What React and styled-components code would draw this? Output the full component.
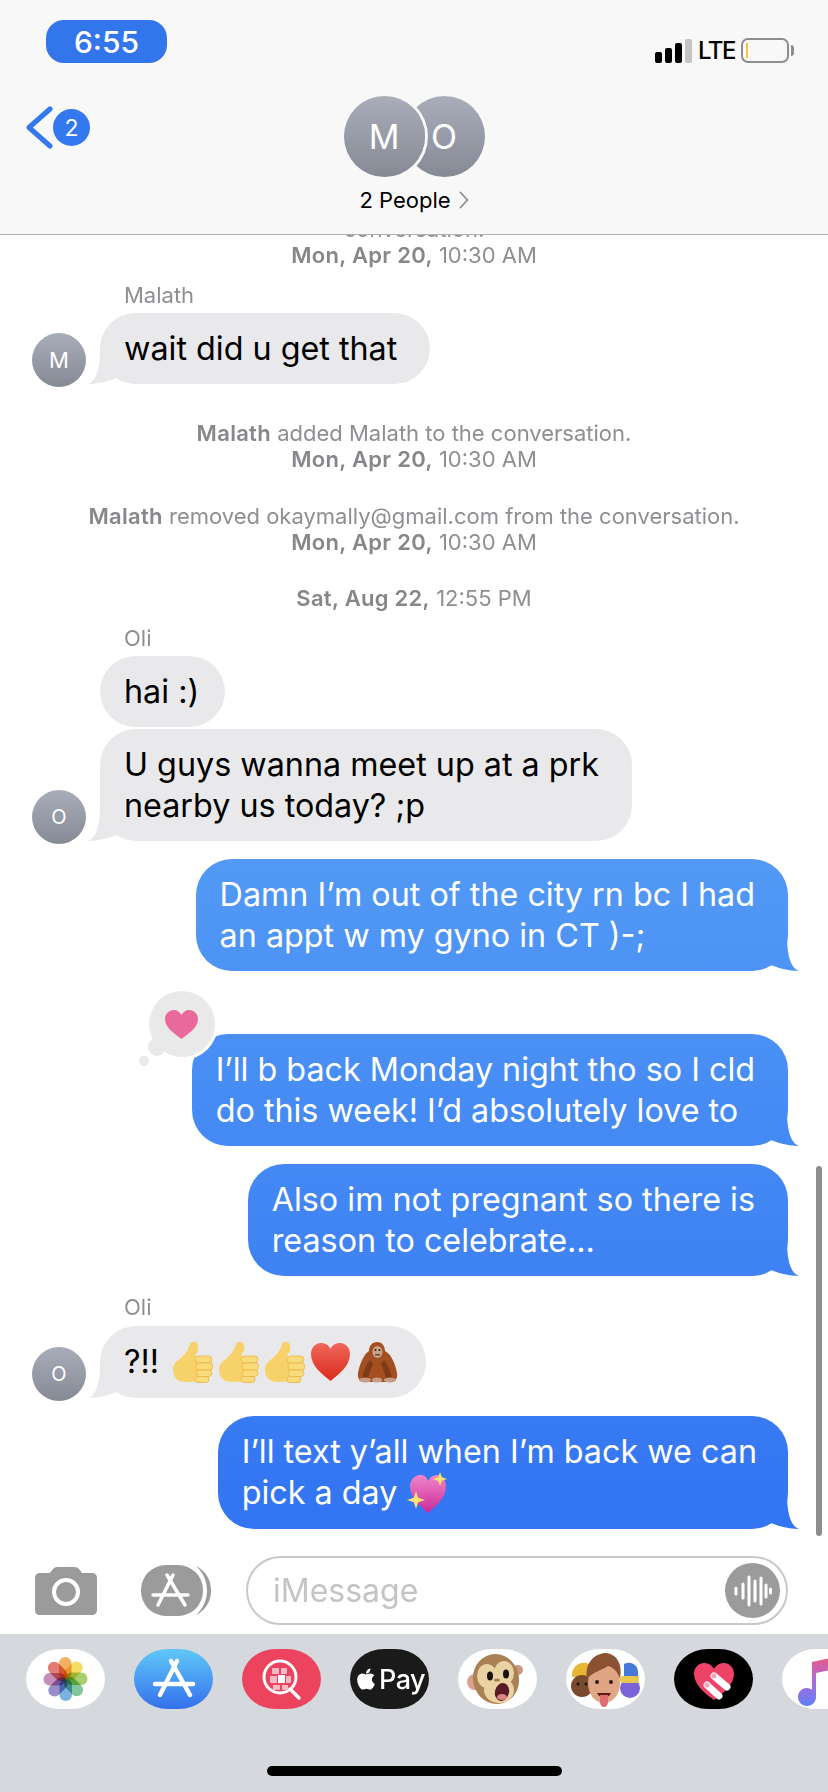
import styled, { createGlobalStyle } from "styled-components"
import { FaApple } from "react-icons/fa"

const GlobalStyle = createGlobalStyle`
    html, body {
        margin: 0;
        padding: 0;
        background: #fff;
    }
    * {
        box-sizing: border-box;
    }
`

const Phone = styled.div`
    position: relative;
    width: 828px;
    height: 1792px;
    display: flex;
    flex-direction: column;
    overflow: hidden;
    font-family: Inter, "Noto Sans", sans-serif;
    background: #fff;
`

const Header = styled.header`
    height: 235px;
    flex-shrink: 0;
    background: #f8f8f8;
    border-bottom: 1px solid #b2b2b2;
    position: relative;
    z-index: 2;
`

const StatusBar = styled.div`
    height: 72px;
    padding: 20px 39px 0 46px;
    display: flex;
    justify-content: space-between;
    align-items: flex-start;
`

const TimePill = styled.div`
    width: 121px;
    height: 43px;
    border-radius: 18px;
    background: #3375ea;
    color: #fff;
    font-size: 30px;
    font-weight: 500;
    display: flex;
    align-items: center;
    justify-content: center;
`

const StatusIcons = styled.div`
    display: flex;
    align-items: center;
    gap: 6px;
    margin-top: 18px;
`

const Lte = styled.span`
    font-size: 24px;
    font-weight: 500;
    letter-spacing: -1.5px;
    line-height: 25px;
    color: #000;
`

const Battery = styled.div`
    position: relative;
    width: 48px;
    height: 25px;
    border: 2px solid #8e8e8e;
    border-radius: 7px;
    padding: 3px;

    &::before {
        content: "";
        display: block;
        width: 2px;
        height: 100%;
        background: #f5c542;
    }

    &::after {
        content: "";
        position: absolute;
        right: -7px;
        top: 5px;
        width: 3px;
        height: 11px;
        border-radius: 0 3px 3px 0;
        background: #8e8e8e;
    }
`

const NavBar = styled.div`
    display: grid;
    grid-template-columns: 1fr auto 1fr;
    padding: 24px 25px 0;
`

const Back = styled.div`
    display: flex;
    align-items: center;
    height: 41px;
    margin-top: 11px;
`

const BackBadge = styled.div`
    width: 37px;
    height: 37px;
    border-radius: 50%;
    background: #3478f0;
    color: #fff;
    font-size: 23px;
    display: flex;
    align-items: center;
    justify-content: center;
`

const NavCenter = styled.div`
    display: flex;
    flex-direction: column;
    align-items: center;
`

const AvatarStack = styled.div`
    display: flex;
`

const Avatar = styled.div`
    position: relative;
    z-index: ${(p) => (p.$front ? 2 : 1)};
    width: ${(p) => p.$size}px;
    height: ${(p) => p.$size}px;
    flex-shrink: 0;
    border-radius: 50%;
    background: linear-gradient(#a9adb9, #858a95);
    color: #fff;
    font-size: ${(p) => p.$font}px;
    font-weight: 400;
    display: flex;
    align-items: center;
    justify-content: center;
    margin-left: ${(p) => p.$overlap || 0}px;
    box-shadow: ${(p) => (p.$front ? "0 0 0 3px #f8f8f8" : "none")};
`

const PeopleRow = styled.div`
    display: flex;
    align-items: center;
    gap: 8px;
    margin-top: 9px;
    font-size: 22px;
    color: #000;
    line-height: 28px;
`

const Messages = styled.main`
    flex: 1;
    min-height: 0;
    overflow: hidden;
    display: flex;
    flex-direction: column;
`

const Note = styled.div`
    text-align: center;
    font-size: 22px;
    line-height: 26px;
    color: #8e8e93;
    margin-top: ${(p) => p.$top}px;
`

const NoteStrong = styled.span`
    font-weight: 600;
    letter-spacing: 0.3px;
    color: #87878b;
`

const Sender = styled.div`
    font-size: 22px;
    line-height: 24px;
    color: #8e8e93;
    padding-left: 124px;
    margin-top: ${(p) => p.$top}px;
`

const InRow = styled.div`
    display: flex;
    align-items: flex-end;
    padding-left: ${(p) => (p.$avatar ? 32 : 100)}px;
    margin-top: ${(p) => p.$top}px;
`

const AvatarSlot = styled.div`
    margin-right: 14px;
    margin-bottom: -3px;
`

const Bubble = styled.div`
    position: relative;
    width: fit-content;
    padding: 15px ${(p) => p.$right ?? 33}px 15px 24px;
    border-radius: 36px;
    font-size: 32.300px;
    line-height: 41px;
    white-space: nowrap;
`

const GrayBubble = styled(Bubble)`
    background: #e9e9eb;
    color: #000;

    &::before {
        display: ${(p) => (p.$tail ? "block" : "none")};
        content: "";
        position: absolute;
        left: -12px;
        bottom: 0;
        width: 42px;
        height: 40px;
        background: #e9e9eb;
        clip-path: path("M0 40C8 37 12 26 12 4L30 4L30 33C22 37 10 40 0 40Z");
    }
`

const OutRow = styled.div`
    display: flex;
    justify-content: flex-end;
    padding-right: 40px;
    margin-top: ${(p) => p.$top}px;
`

const BlueBubble = styled(Bubble)`
    background: linear-gradient(#6fb2f7 0, #5aa2f6 700px, #3274f2 1530px) fixed;
    color: #fff;

    &::before {
        content: "";
        position: absolute;
        right: -11px;
        bottom: 0;
        width: 42px;
        height: 40px;
        background: inherit;
        background-attachment: fixed;
        clip-path: path("M42 40C34 37 30 26 30 4L12 4L12 33C20 37 32 40 42 40Z");
    }
`

const Tapback = styled.div`
    position: absolute;
    left: -43px;
    top: -43px;
    width: 66px;
    height: 66px;
    border-radius: 50%;
    background: #e9e9ea;
    box-shadow: 0 0 0 3px #fff;
    display: flex;
    align-items: center;
    justify-content: center;
    z-index: 1;

    &::before {
        content: "";
        position: absolute;
        left: -1px;
        top: 47px;
        width: 18px;
        height: 18px;
        border-radius: 50%;
        background: #e9e9ea;
    }

    &::after {
        content: "";
        position: absolute;
        left: -10px;
        top: 65px;
        width: 10px;
        height: 10px;
        border-radius: 50%;
        background: #e9e9ea;
    }
`

const Emoji = styled.svg`
    display: inline-block;
    width: 41px;
    height: 42px;
    vertical-align: -10px;
    margin-left: ${(p) => p.$lead ?? 0}px;
    margin-right: ${(p) => p.$gap ?? 5}px;
`

const Scrollbar = styled.div`
    position: absolute;
    right: 6px;
    top: 1166px;
    width: 6px;
    height: 370px;
    border-radius: 3px;
    background: #8d8d8d;
    z-index: 3;
`

const Composer = styled.div`
    height: 89px;
    flex-shrink: 0;
    padding: 2px 40px 0 35px;
    display: flex;
    align-items: center;
`

const InputBox = styled.div`
    flex: 1;
    height: 69px;
    margin-left: 35px;
    border: 2px solid #c8c8c8;
    border-radius: 35px;
    padding: 0 6px 0 25px;
    display: flex;
    align-items: center;
    justify-content: space-between;
`

const Placeholder = styled.span`
    font-size: 32px;
    color: #c4c4c6;
`

const MicButton = styled.div`
    width: 55px;
    height: 55px;
    border-radius: 50%;
    background: #9b9b9b;
    display: flex;
    align-items: center;
    justify-content: center;
`

const AppButton = styled.svg`
    width: 70px;
    height: 51px;
    margin-left: 44px;
    flex-shrink: 0;
`

const CameraIcon = styled.svg`
    width: 62px;
    height: 48px;
    flex-shrink: 0;
`

const Drawer = styled.div`
    height: 158px;
    flex-shrink: 0;
    background: #d5d8dd;
    padding-top: 15px;
    overflow: hidden;
`

const AppRow = styled.div`
    display: flex;
    gap: 29px;
    padding-left: 26px;
`

const AppPill = styled.div`
    width: 79px;
    height: 60px;
    flex-shrink: 0;
    border-radius: 34px / 30px;
    overflow: hidden;
    background: ${(p) => p.$bg || "#fff"};
    display: flex;
    align-items: center;
    justify-content: center;
`

const PayLabel = styled.span`
    color: #fff;
    font-size: 27px;
    font-weight: 500;
    letter-spacing: -0.5px;
    margin-left: 1px;
`

const PillArt = styled.svg`
    width: 79px;
    height: 60px;
    display: block;
`

const HomeBar = styled.div`
    width: 295px;
    height: 10px;
    border-radius: 5px;
    background: #000;
    margin: 57px auto 0;
`

function ThumbsUp({ lead }) {
    return (
        <Emoji viewBox="0 0 41 42" $lead={lead}>
            <path d="M1 28c0-6 6-9 10-13 4-4 6-8 7-12 1-3 7-3 8 1 1 4-1 8-3 11h12c4 0 4 22 0 23-6 2-14 3-21 3C6 41 1 37 1 28z" fill="#f7d26a" />
            <g fill="#fadb7c" stroke="#e8b548" strokeWidth="0.800">
                <rect x="23" y="15" width="17" height="7" rx="3.500" />
                <rect x="24" y="22" width="17" height="7" rx="3.500" />
                <rect x="24" y="29" width="16" height="6.500" rx="3.250" />
                <rect x="23" y="35.500" width="14" height="6" rx="3" />
            </g>
        </Emoji>
    )
}

function RedHeart() {
    return (
        <Emoji viewBox="0 0 41 42" $gap={6}>
            <defs>
                <linearGradient id="redHeart" x1="0" y1="0" x2="0" y2="1">
                    <stop offset="0" stopColor="#f0685a" />
                    <stop offset="1" stopColor="#d92a1c" />
                </linearGradient>
            </defs>
            <path d="M20.500 40C12 33 1 25 1 13 1 6 6 2 11 2c4 0 8 2 9.500 6C22 4 26 2 30 2c5 0 10 4 10 11 0 12-11 20-19.500 27z" fill="url(#redHeart)" />
        </Emoji>
    )
}

function Orangutan() {
    return (
        <Emoji viewBox="0 0 41 42" $gap={0}>
            <path d="M20 1c5 0 8 4 8 9 6 3 10 12 12 22 1 5-2 9-6 9H7c-4 0-7-4-6-9C3 22 7 13 12 10c0-5 3-9 8-9z" fill="#a34f22" />
            <path d="M13 19c-4 5-7 12-8 19h6c1-6 3-11 5-15zM27 19c4 5 7 12 8 19h-6c-1-6-3-11-5-15z" fill="#7d3a17" />
            <ellipse cx="20.500" cy="11" rx="5" ry="6" fill="#c9a48a" />
            <circle cx="18.500" cy="9" r="1" fill="#2d1a10" />
            <circle cx="22.500" cy="9" r="1" fill="#2d1a10" />
            <rect x="18" y="13" width="5" height="1.500" fill="#6b4632" />
            <ellipse cx="8" cy="39" rx="6" ry="2.500" fill="#c99c85" />
            <ellipse cx="20" cy="39" rx="5" ry="2.500" fill="#c99c85" />
            <ellipse cx="33" cy="39" rx="6" ry="2.500" fill="#c99c85" />
        </Emoji>
    )
}

function SparkleHeart() {
    return (
        <Emoji viewBox="0 0 41 42" $gap={0}>
            <defs>
                <linearGradient id="sparkleHeart" x1="0" y1="0" x2="0" y2="1">
                    <stop offset="0" stopColor="#f286c8" />
                    <stop offset="1" stopColor="#c72a9a" />
                </linearGradient>
            </defs>
            <path d="M21 41C13 34 3 26 3 14 3 8 8 3 13 3c4 0 7 2 8 6 2-4 5-6 9-6 5 0 9 5 9 11 0 12-10 20-18 27z" fill="url(#sparkleHeart)" />
            <path d="M33 0l1.800 5.200L40 7l-5.200 1.800L33 14l-1.800-5.200L26 7l5.200-1.800zM9 19l2.200 6.800L18 28l-6.800 2.200L9 37l-2.200-6.800L0 28l6.800-2.200z" fill="#fbe36d" />
        </Emoji>
    )
}

function PhotosFlower() {
    const petals = ["#f0a64a", "#f2d94e", "#9cc95a", "#6fbf8f", "#68a9dc", "#8d7fc4", "#bd7fb0", "#df6a5e"]
    return (
        <PillArt viewBox="0 0 79 60">
            {petals.map((color, i) => (
                <rect
                    key={color}
                    x="33"
                    y="8"
                    width="12.500"
                    height="22"
                    rx="6.250"
                    fill={color}
                    opacity="0.88"
                    style={{ mixBlendMode: "multiply" }}
                    transform={`rotate(${i * 45} 39.500 30)`}
                />
            ))}
        </PillArt>
    )
}

function SearchGlobe() {
    return (
        <PillArt viewBox="0 0 79 60">
            <circle cx="38" cy="28" r="16" fill="none" stroke="#fff" strokeWidth="3" />
            <g fill="#f7b9c4">
                <rect x="30" y="19" width="7" height="6" />
                <rect x="39" y="19" width="6" height="6" />
                <rect x="28" y="27" width="7" height="7" />
                <rect x="44" y="27" width="5" height="7" />
                <rect x="31" y="36" width="7" height="5" />
                <rect x="40" y="36" width="6" height="5" />
            </g>
            <rect x="36" y="26" width="7" height="8" fill="#fff" />
            <path d="M48 40l9 9" stroke="#fff" strokeWidth="3.500" strokeLinecap="round" />
        </PillArt>
    )
}

function Monkey() {
    return (
        <PillArt viewBox="0 0 79 60">
            <circle cx="17" cy="33" r="8" fill="#d9a08e" />
            <circle cx="60" cy="21" r="5" fill="#c9977f" />
            <ellipse cx="38" cy="30" rx="23" ry="25" fill="#a98152" transform="rotate(-12 38 30)" />
            <ellipse cx="29" cy="27" rx="10" ry="12" fill="#ead3a3" />
            <ellipse cx="46" cy="24" rx="10" ry="12" fill="#ead3a3" />
            <ellipse cx="41" cy="41" rx="15" ry="13" fill="#ead3a3" />
            <ellipse cx="32" cy="27" rx="3" ry="4.500" fill="#1a1210" />
            <ellipse cx="48" cy="25" rx="3" ry="4.500" fill="#1a1210" />
            <ellipse cx="39" cy="31" rx="3" ry="1.500" fill="#a77f56" />
            <ellipse cx="44" cy="43" rx="7" ry="9" fill="#5a1c24" transform="rotate(15 44 43)" />
            <ellipse cx="44" cy="48" rx="5" ry="3" fill="#d9848a" />
        </PillArt>
    )
}

function MemojiGroup() {
    return (
        <PillArt viewBox="0 0 79 60">
            <path d="M58 15c8-4 15 2 14 10v8H58z" fill="#4678d8" />
            <circle cx="64" cy="39" r="10" fill="#7a62d8" />
            <rect x="54" y="27" width="19" height="7" rx="3" fill="#e9c64e" />
            <path d="M6 26c0-8 7-13 14-12 5 1 8 4 8 10v4H6z" fill="#e8b632" />
            <circle cx="16" cy="37" r="11" fill="#7a4a2e" />
            <circle cx="12" cy="35" r="1.500" fill="#1a100c" />
            <circle cx="20" cy="35" r="1.500" fill="#1a100c" />
            <ellipse cx="38" cy="34" rx="16" ry="20" fill="#e0a583" />
            <path d="M21 30C18 13 30 4 40 4c10 1 17 10 14 26-2-7-7-12-12-13-6 4-15 6-21 13z" fill="#8a5232" />
            <circle cx="31" cy="33" r="2" fill="#2c1a10" />
            <circle cx="45" cy="33" r="2" fill="#2c1a10" />
            <path d="M31 44h14c-1 3-4 4-7 4s-6-1-7-4z" fill="#5e1d1d" />
            <path d="M34 46h8v7c0 3-2 5-4 5s-4-2-4-5z" fill="#e06b70" />
        </PillArt>
    )
}

function HeartFingers() {
    return (
        <PillArt viewBox="0 0 79 60">
            <path d="M40 51C30 44 20 35 20 25c0-7 5-11 10-11 4 0 8 2 10 6 2-4 6-6 10-6 5 0 10 4 10 11 0 10-10 19-20 26z" fill="#ee4266" />
            <g strokeLinecap="round">
                <path d="M40 27l13 11" stroke="#fff" strokeWidth="7" />
                <path d="M33 36l12 11" stroke="#fff" strokeWidth="7" />
                <circle cx="40" cy="27" r="2.500" fill="#f6a5b8" />
                <circle cx="33" cy="36" r="2.500" fill="#f6a5b8" />
            </g>
        </PillArt>
    )
}

function MusicNote() {
    return (
        <PillArt viewBox="0 0 79 60">
            <defs>
                <linearGradient id="musicNote" x1="0" y1="0" x2="0" y2="1">
                    <stop offset="0" stopColor="#f2566a" />
                    <stop offset="0.5" stopColor="#b668d8" />
                    <stop offset="1" stopColor="#5f7ff5" />
                </linearGradient>
            </defs>
            <path d="M30 13l50-11v12L34 24v24a9 9 0 1 1-4-7.500z" fill="url(#musicNote)" />
            <circle cx="70" cy="46" r="9" fill="#5f8ff5" />
        </PillArt>
    )
}

function App() {
    return (
        <Phone>
            <GlobalStyle />
            <Header>
                <StatusBar>
                    <TimePill>6:55</TimePill>
                    <StatusIcons>
                        <svg width="37" height="25" viewBox="0 0 37 25">
                            <rect x="0" y="14" width="7" height="11" rx="2" fill="#000" />
                            <rect x="10" y="10" width="7" height="15" rx="2" fill="#000" />
                            <rect x="20" y="5" width="7" height="20" rx="2" fill="#000" />
                            <rect x="30" y="1" width="7" height="24" rx="2" fill="#c4c4c4" />
                        </svg>
                        <Lte>LTE</Lte>
                        <Battery />
                    </StatusIcons>
                </StatusBar>
                <NavBar>
                    <Back>
                        <svg width="28" height="43" viewBox="0 0 28 43">
                            <path d="M25 3L4 21.500 25 40" fill="none" stroke="#3478f0" strokeWidth="5" strokeLinecap="round" strokeLinejoin="round" />
                        </svg>
                        <BackBadge>2</BackBadge>
                    </Back>
                    <NavCenter>
                        <AvatarStack>
                            <Avatar $size={81} $font={34} $front>M</Avatar>
                            <Avatar $size={81} $font={34} $overlap={-21}>O</Avatar>
                        </AvatarStack>
                        <PeopleRow>
                            2 People
                            <svg width="10" height="18" viewBox="0 0 10 18">
                                <path d="M1.500 1.500L8.500 9l-7 7.500" fill="none" stroke="#8e8e93" strokeWidth="1.800" strokeLinecap="round" strokeLinejoin="round" />
                            </svg>
                        </PeopleRow>
                    </NavCenter>
                    <div />
                </NavBar>
            </Header>

            <Messages>
                <Note $top={-19}>
                    conversation.
                    <br />
                    <NoteStrong>Mon, Apr 20,</NoteStrong> 10:30 AM
                </Note>
                <Sender $top={15}>Malath</Sender>
                <InRow $avatar $top={6}>
                    <AvatarSlot>
                        <Avatar $size={54} $font={22}>M</Avatar>
                    </AvatarSlot>
                    <GrayBubble $tail>wait did u get that</GrayBubble>
                </InRow>
                <Note $top={36}>
                    <NoteStrong>Malath</NoteStrong> added Malath to the conversation.
                    <br />
                    <NoteStrong>Mon, Apr 20,</NoteStrong> 10:30 AM
                </Note>
                <Note $top={31}>
                    <NoteStrong>Malath</NoteStrong> removed okaymally@gmail.com from the conversation.
                    <br />
                    <NoteStrong>Mon, Apr 20,</NoteStrong> 10:30 AM
                </Note>
                <Note $top={30}>
                    <NoteStrong>Sat, Aug 22,</NoteStrong> 12:55 PM
                </Note>
                <Sender $top={15}>Oli</Sender>
                <InRow $top={6}>
                    <GrayBubble $right={26}>hai :)</GrayBubble>
                </InRow>
                <InRow $avatar $top={2}>
                    <AvatarSlot>
                        <Avatar $size={54} $font={20}>O</Avatar>
                    </AvatarSlot>
                    <GrayBubble $tail>
                        U guys wanna meet up at a prk
                        <br />
                        nearby us today? ;p
                    </GrayBubble>
                </InRow>
                <OutRow $top={18}>
                    <BlueBubble>
                        Damn I’m out of the city rn bc I had
                        <br />
                        an appt w my gyno in CT )-;
                    </BlueBubble>
                </OutRow>
                <OutRow $top={63}>
                    <BlueBubble>
                        <Tapback>
                            <svg width="33" height="29" viewBox="0 0 33 29">
                                <path d="M16.500 29C10 24 0 18 0 9c0-5 4-9 9-9 3 0 6 2 7.500 5C18 2 21 0 24 0c5 0 9 4 9 9 0 9-10 15-16.500 20z" fill="#e96a9a" />
                            </svg>
                        </Tapback>
                        I’ll b back Monday night tho so I cld
                        <br />
                        do this week! I’d absolutely love to
                    </BlueBubble>
                </OutRow>
                <OutRow $top={18}>
                    <BlueBubble>
                        Also im not pregnant so there is
                        <br />
                        reason to celebrate...
                    </BlueBubble>
                </OutRow>
                <Sender $top={19}>Oli</Sender>
                <InRow $avatar $top={7}>
                    <AvatarSlot>
                        <Avatar $size={54} $font={20}>O</Avatar>
                    </AvatarSlot>
                    <GrayBubble $tail $right={28}>
                        ?!!{" "}
                        <ThumbsUp lead={4} />
                        <ThumbsUp />
                        <ThumbsUp />
                        <RedHeart />
                        <Orangutan />
                    </GrayBubble>
                </InRow>
                <OutRow $top={18}>
                    <BlueBubble $right={31}>
                        I’ll text y’all when I’m back we can
                        <br />
                        pick a day <SparkleHeart />
                    </BlueBubble>
                </OutRow>
            </Messages>

            <Composer>
                <CameraIcon viewBox="0 0 62 48">
                    <path d="M5 6h10l3-4c1-1 2-2 4-2h18c2 0 3 1 4 2l3 4h10c3 0 5 2 5 5v32c0 3-2 5-5 5H5c-3 0-5-2-5-5V11c0-3 2-5 5-5z" fill="#9b9b9b" />
                    <circle cx="31" cy="25" r="12" fill="none" stroke="#fff" strokeWidth="4" />
                </CameraIcon>
                <AppButton viewBox="0 0 70 51">
                    <path d="M55 1c10 5 15 14 15 24.500S65 45 55 50c7-6 11-15 11-24.500S62 7 55 1z" fill="#9b9b9b" />
                    <rect x="0" y="0" width="62" height="51" rx="25" fill="#9b9b9b" />
                    <g stroke="#fff" strokeWidth="3.500" strokeLinecap="round" fill="none">
                        <path d="M26 10l18 30" />
                        <path d="M32 10L17 40" />
                        <path d="M12 30h35" />
                    </g>
                </AppButton>
                <InputBox>
                    <Placeholder>iMessage</Placeholder>
                    <MicButton>
                        <svg width="38" height="34" viewBox="0 0 38 34">
                            <g stroke="#fff" strokeWidth="3" strokeLinecap="round">
                                <path d="M2 14v6" />
                                <path d="M9 10v14" />
                                <path d="M15 3v28" />
                                <path d="M21 7v20" />
                                <path d="M27 4v26" />
                                <path d="M32 11v12" />
                                <path d="M36.500 15v4" />
                            </g>
                        </svg>
                    </MicButton>
                </InputBox>
            </Composer>

            <Drawer>
                <AppRow>
                    <AppPill><PhotosFlower /></AppPill>
                    <AppPill $bg="linear-gradient(#5fc8f8, #3470ec)">
                        <PillArt viewBox="0 0 79 60">
                            <g stroke="#fff" strokeWidth="4.500" strokeLinecap="round" fill="none">
                                <path d="M37 12l19 34" />
                                <path d="M43 12L26 46" />
                                <path d="M21 35h38" />
                            </g>
                        </PillArt>
                    </AppPill>
                    <AppPill $bg="#ec445f"><SearchGlobe /></AppPill>
                    <AppPill $bg="#1a1a1a">
                        <FaApple size={24} color="#fff" />
                        <PayLabel>Pay</PayLabel>
                    </AppPill>
                    <AppPill><Monkey /></AppPill>
                    <AppPill><MemojiGroup /></AppPill>
                    <AppPill $bg="#000"><HeartFingers /></AppPill>
                    <AppPill><MusicNote /></AppPill>
                </AppRow>
                <HomeBar />
            </Drawer>

            <Scrollbar />
        </Phone>
    )
}

export default App
